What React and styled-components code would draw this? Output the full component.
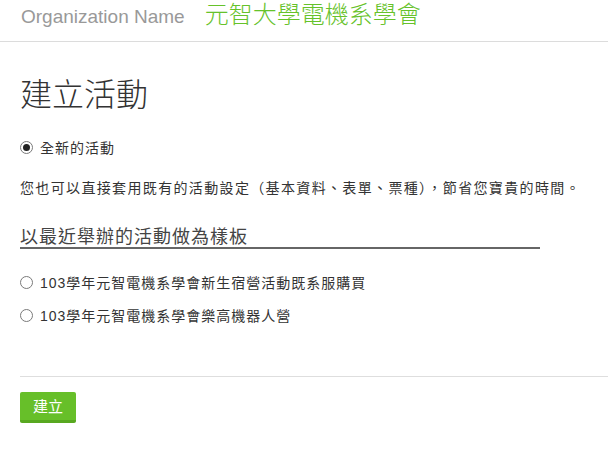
import React from 'react';
import styled, { createGlobalStyle } from 'styled-components';

const GlobalStyle = createGlobalStyle`
  html, body {
    margin: 0;
    padding: 0;
    background: #fff;
    overflow: hidden;
  }
  body {
    font-family: "Liberation Sans", "Noto Sans CJK TC", sans-serif;
    color: #333;
  }
`;

const Header = styled.header`
  display: flex;
  align-items: baseline;
  gap: 20px;
  height: 41px;
  padding: 0 21px;
  border-bottom: 1px solid #dcdcdc;
  box-sizing: content-box;
`;

const OrgLabel = styled.span`
  font-size: 19px;
  line-height: 1;
  color: #999;
`;

const OrgName = styled.span`
  font-family: "Noto Sans CJK TC", sans-serif;
  font-size: 24px;
  font-weight: 300;
  line-height: 1.05;
  color: #66c22a;
`;

const Main = styled.main`
  display: flex;
  flex-direction: column;
  align-items: flex-start;
  padding-left: 20px;
`;

const Title = styled.h1`
  margin: 34px 0 29px;
  font-family: "Noto Sans CJK TC", sans-serif;
  font-size: 32px;
  font-weight: 300;
  line-height: 32px;
  color: #333;
`;

const RadioRow = styled.label`
  display: flex;
  align-items: center;
  gap: 7px;
  height: 20px;
  font-family: "Liberation Sans", "Noto Sans CJK TC", sans-serif;
  font-size: 14px;
  letter-spacing: 1px;
  color: #333;
  cursor: pointer;
`;

const Radio = styled.input.attrs({ type: 'radio' })`
  appearance: none;
  margin: 0;
  width: 13px;
  height: 13px;
  border: 1px solid #7a7a7a;
  border-radius: 50%;
  box-sizing: border-box;
  display: grid;
  place-items: center;
  background: #fff;

  &:checked::after {
    content: '';
    width: 7px;
    height: 7px;
    border-radius: 50%;
    background: #222;
  }
`;

const Hint = styled.p`
  margin: 20px 0 26px;
  font-family: "Noto Sans CJK TC", sans-serif;
  font-size: 14px;
  letter-spacing: 1.35px;
  line-height: 20px;
  color: #333;
`;

const SectionHeading = styled.h2`
  margin: 0 0 23px;
  width: 520px;
  font-family: "Noto Sans CJK TC", sans-serif;
  font-size: 18px;
  font-weight: 400;
  letter-spacing: 1px;
  line-height: 24px;
  color: #444;
  border-bottom: 2px solid #666;
`;

const OptionList = styled.div`
  display: flex;
  flex-direction: column;
  gap: 13px;
`;

const Divider = styled.hr`
  align-self: stretch;
  margin: 51px 0 15px;
  border: 0;
  border-top: 1px solid #dedede;
`;

const SubmitButton = styled.button`
  width: 56px;
  height: 31px;
  padding: 0;
  border: 0;
  border-bottom: 3px solid #58a820;
  border-radius: 2px;
  background: #67bf29;
  color: #fff;
  font-family: "Noto Sans CJK TC", sans-serif;
  font-size: 15px;
  line-height: 28px;
  cursor: pointer;
`;

const templates = [
  '103學年元智電機系學會新生宿營活動既系服購買',
  '103學年元智電機系學會樂高機器人營',
];

const App = () => (
  <>
    <GlobalStyle />
    <Header>
      <OrgLabel>Organization Name</OrgLabel>
      <OrgName>元智大學電機系學會</OrgName>
    </Header>
    <Main>
      <Title>建立活動</Title>
      <RadioRow>
        <Radio name="source" defaultChecked />
        全新的活動
      </RadioRow>
      <Hint>您也可以直接套用既有的活動設定（基本資料、表單、票種），節省您寶貴的時間。</Hint>
      <SectionHeading>以最近舉辦的活動做為樣板</SectionHeading>
      <OptionList>
        {templates.map((name) => (
          <RadioRow key={name}>
            <Radio name="source" />
            {name}
          </RadioRow>
        ))}
      </OptionList>
      <Divider />
      <SubmitButton>建立</SubmitButton>
    </Main>
  </>
);

export default App;
